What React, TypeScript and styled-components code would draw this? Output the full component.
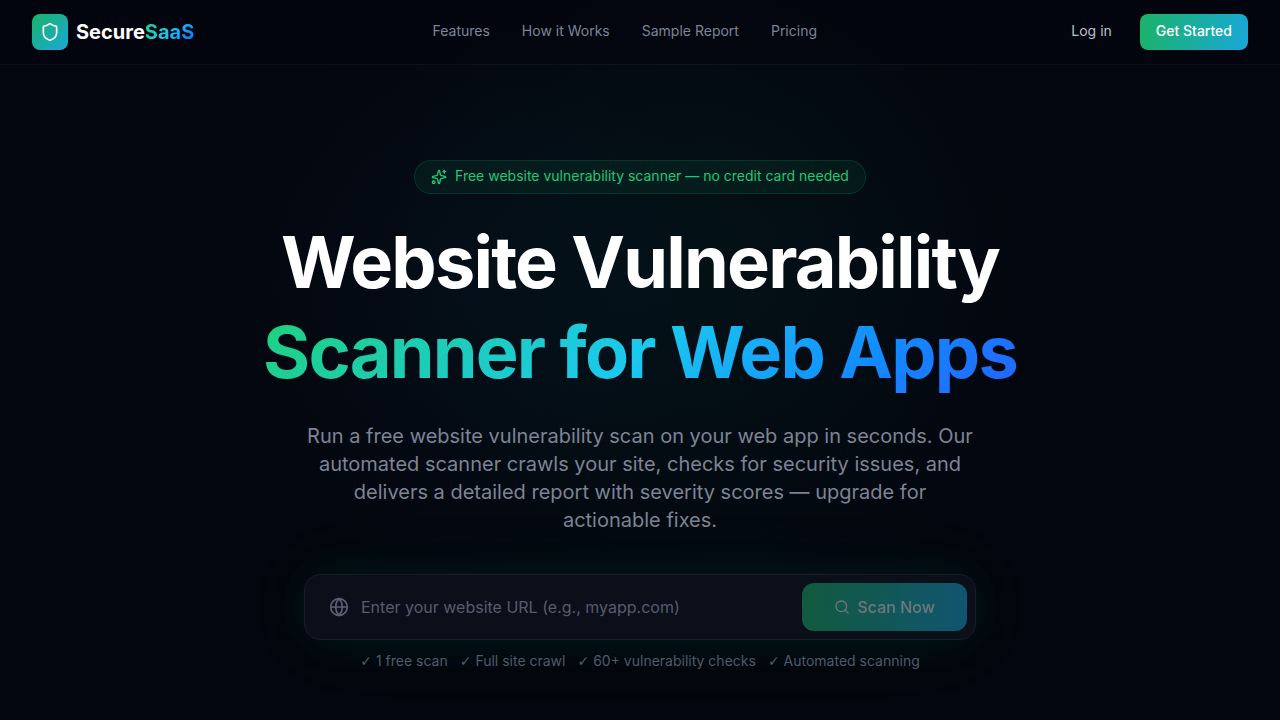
import React, { useState } from "react";
import styled, { createGlobalStyle } from "styled-components";
import { Globe, Search, Shield, Sparkles } from "lucide-react";

const GlobalStyle = createGlobalStyle`
  *, *::before, *::after { box-sizing: border-box; }
  body {
    margin: 0;
    background: #03060e;
    color: #ffffff;
    font-family: Inter, "Liberation Sans", sans-serif;
    font-size: 16px;
    line-height: 24px;
    -webkit-font-smoothing: antialiased;
  }
  h1, p, ul { margin: 0; padding: 0; }
  ul { list-style: none; }
  a { color: inherit; text-decoration: none; }
  button, input { font: inherit; border: 0; }
`;

const markGradient = "linear-gradient(135deg, #1bb368, #18a8d8)";
const buttonGradient = "linear-gradient(100deg, #1bb368, #18a8d8)";
const textGradient = "linear-gradient(135deg, #1fd17c, #1bc9ee 50%, #128cff 78%, #2463ff)";

const Page = styled.div`
  display: flex;
  flex-direction: column;
  min-height: 100vh;
  background:
    radial-gradient(ellipse 340px 340px at 56% 250px, rgba(8, 190, 130, 0.03), transparent),
    radial-gradient(ellipse 260px 280px at 36% 290px, rgba(40, 110, 200, 0.03), transparent),
    radial-gradient(ellipse 430px 370px at 50% 290px, rgba(10, 170, 170, 0.04), transparent),
    #03060e;
`;

const Header = styled.header`
  display: flex;
  align-items: center;
  justify-content: space-between;
  padding: 14px 32px;
  border-bottom: 1px solid #0c111b;
  background: rgba(3, 6, 14, 0.9);
`;

const Logo = styled.a`
  display: flex;
  align-items: center;
  gap: 8px;
  font-size: 20px;
  font-weight: 700;
  line-height: 28px;
`;

const LogoMark = styled.span`
  display: grid;
  place-items: center;
  width: 36px;
  height: 36px;
  border-radius: 8px;
  background: ${markGradient};
`;

const GradientText = styled.span<{ $block?: boolean }>`
  display: ${(p) => (p.$block ? "block" : "inline")};
  background: ${textGradient};
  background-clip: text;
  -webkit-background-clip: text;
  color: transparent;
`;

const Nav = styled.nav`
  display: flex;
  gap: 32px;
`;

const NavLink = styled.a`
  color: #7d8495;
  font-size: 14px;
  line-height: 20px;
  padding-bottom: 2px;
`;

const Actions = styled.div`
  display: flex;
  align-items: center;
  gap: 12px;
`;

const HeaderButton = styled.button<{ $primary?: boolean }>`
  height: 36px;
  padding: 0 16px 2px;
  border-radius: 8px;
  background: ${(p) => (p.$primary ? buttonGradient : "transparent")};
  color: ${(p) => (p.$primary ? "#ffffff" : "#bcc0c8")};
  font-size: 14px;
  font-weight: ${(p) => (p.$primary ? 500 : 400)};
  line-height: 20px;
`;

const Hero = styled.main`
  display: flex;
  flex: 1;
  flex-direction: column;
  align-items: center;
  padding: 95px 32px 48px;
  text-align: center;
`;

const Badge = styled.div`
  display: flex;
  align-items: center;
  gap: 8px;
  height: 34px;
  padding: 0 16px;
  border: 1px solid rgba(31, 209, 124, 0.14);
  border-radius: 17px;
  background: rgba(31, 209, 124, 0.07);
  color: #1fc977;
  font-size: 14px;
  line-height: 20px;
`;

const BadgeText = styled.span`
  padding-bottom: 2px;
`;

const Title = styled.h1`
  margin-top: 23px;
  font-size: 72px;
  font-weight: 700;
  line-height: 90px;
  letter-spacing: -0.025em;
`;

const Lead = styled.p`
  max-width: 672px;
  margin-top: 25px;
  color: #7d8495;
  font-size: 20px;
  line-height: 28px;
`;

const ScanForm = styled.form`
  display: flex;
  align-items: center;
  width: 100%;
  max-width: 672px;
  margin-top: 40px;
  padding: 8px 8px 8px 24px;
  border: 1px solid #171c28;
  border-radius: 16px;
  background: #0b0f19;
  box-shadow: 0 0 40px rgba(20, 190, 130, 0.08), 0 0 80px rgba(20, 190, 130, 0.06);
`;

const UrlField = styled.label`
  display: flex;
  flex: 1;
  align-items: center;
  gap: 12px;
  color: #5a6072;
`;

const UrlInput = styled.input`
  flex: 1;
  min-width: 0;
  height: 48px;
  padding: 0;
  outline: 0;
  background: transparent;
  color: #ffffff;
  &::placeholder { color: #565c6e; opacity: 1; }
`;

const ScanButton = styled.button`
  display: flex;
  align-items: center;
  gap: 8px;
  height: 48px;
  padding: 0 32px;
  border-radius: 12px;
  background: ${buttonGradient};
  color: #ffffff;
  font-weight: 500;
  &:disabled { color: #e6eef4; opacity: 0.46; }
`;

const Perks = styled.ul`
  display: flex;
  flex-wrap: wrap;
  justify-content: center;
  gap: 12px;
  margin-top: 11px;
  color: #4f5b69;
  font-size: 14px;
  line-height: 20px;
`;

const Tick = styled.span`
  font-family: "DejaVu Sans", sans-serif;
`;

const navItems = ["Features", "How it Works", "Sample Report", "Pricing"];
const perks = ["1 free scan", "Full site crawl", "60+ vulnerability checks", "Automated scanning"];

export default function App() {
  const [url, setUrl] = useState("");
  return (
    <Page>
      <GlobalStyle />
      <Header>
        <Logo href="#">
          <LogoMark><Shield size={20} /></LogoMark>
          <span>Secure<GradientText>SaaS</GradientText></span>
        </Logo>
        <Nav>
          {navItems.map((item) => <NavLink key={item} href="#">{item}</NavLink>)}
        </Nav>
        <Actions>
          <HeaderButton type="button">Log in</HeaderButton>
          <HeaderButton type="button" $primary>Get Started</HeaderButton>
        </Actions>
      </Header>
      <Hero>
        <Badge>
          <Sparkles size={16} />
          <BadgeText>Free website vulnerability scanner — no credit card needed</BadgeText>
        </Badge>
        <Title>
          Website Vulnerability
          <GradientText $block>Scanner for Web Apps</GradientText>
        </Title>
        <Lead>
          Run a free website vulnerability scan on your web app in seconds. Our automated scanner
          crawls your site, checks for security issues, and delivers a detailed report with severity
          scores — upgrade for actionable fixes.
        </Lead>
        <ScanForm onSubmit={(e) => e.preventDefault()}>
          <UrlField>
            <Globe size={20} />
            <UrlInput
              type="text"
              aria-label="Website URL"
              placeholder="Enter your website URL (e.g., myapp.com)"
              value={url}
              onChange={(e) => setUrl(e.target.value)}
            />
          </UrlField>
          <ScanButton type="submit" disabled={!url}>
            <Search size={16} />
            Scan Now
          </ScanButton>
        </ScanForm>
        <Perks>
          {perks.map((perk) => <li key={perk}><Tick>✓</Tick> {perk}</li>)}
        </Perks>
      </Hero>
    </Page>
  );
}
